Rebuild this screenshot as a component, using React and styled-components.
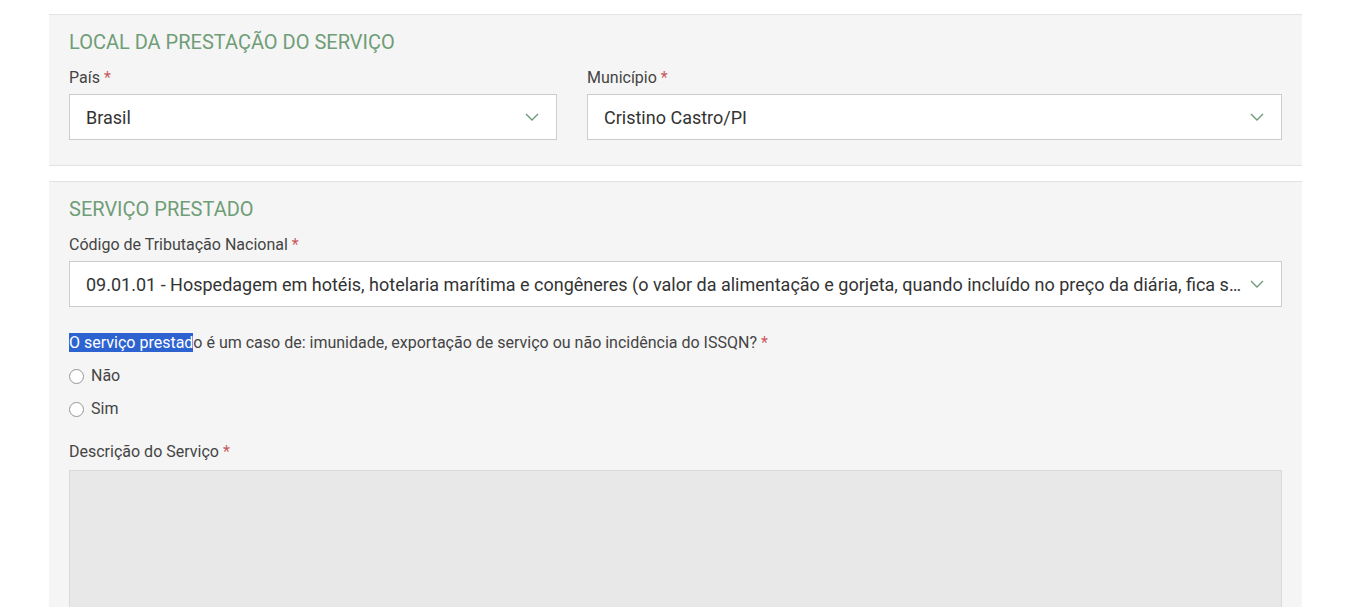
import React from "react";
import styled, { createGlobalStyle } from "styled-components";

const GlobalStyle = createGlobalStyle`
  html, body {
    margin: 0;
    padding: 0;
    background: #ffffff;
  }
  body {
    font-family: Roboto, "Liberation Sans", sans-serif;
    color: #444444;
  }
  * {
    box-sizing: border-box;
  }
`;

const Page = styled.div`
  width: 1253px;
  margin: 0 0 0 49px;
  padding: 14px 0 300px;
  display: flex;
  flex-direction: column;
  gap: 15px;
`;

const Section = styled.section`
  background: #f5f5f5;
  border-top: 1px solid #e3e3e3;
  border-bottom: 1px solid #e3e3e3;
  padding: 16px 20px 25px;
`;

const SectionTitle = styled.h2`
  margin: 0 0 3px;
  font-size: 20px;
  font-weight: 400;
  line-height: 22px;
  color: #6f9d77;
  text-transform: uppercase;
`;

const Row = styled.div`
  display: grid;
  grid-template-columns: ${(p) => p.$cols || "1fr"};
  column-gap: 30px;
`;

const Field = styled.div`
  display: flex;
  flex-direction: column;
  min-width: 0;
  margin-top: ${(p) => p.$top || 0}px;
`;

const Label = styled.label`
  font-size: 16px;
  line-height: 22px;
  color: #444444;
  margin-top: 11px;
  margin-bottom: 5px;
`;

const Required = styled.span`
  color: #c9595c;
  margin-left: 4px;
`;

const SelectBox = styled.div`
  height: 46px;
  background: #ffffff;
  border: 1px solid #cccccc;
  display: flex;
  align-items: center;
  padding: 0 17px 0 16px;
  gap: 2px;
`;

const SelectValue = styled.span`
  flex: 1;
  min-width: 0;
  font-size: 18px;
  color: #333333;
  white-space: nowrap;
  overflow: hidden;
  text-overflow: ellipsis;
`;

const Question = styled.div`
  margin-top: 25px;
  font-size: 16px;
  line-height: 22px;
  color: #444444;
`;

const Selected = styled.span`
  background: #2d63d0;
  color: #ffffff;
`;

const RadioList = styled.div`
  display: flex;
  flex-direction: column;
  gap: 11px;
  margin-top: 11px;
`;

const RadioRow = styled.label`
  display: flex;
  align-items: center;
  gap: 7px;
  font-size: 16px;
  line-height: 22px;
  color: #444444;
`;

const RadioCircle = styled.span`
  width: 15px;
  height: 15px;
  border-radius: 50%;
  border: 1px solid #959595;
  background: #ffffff;
`;

const TextArea = styled.div`
  margin-top: 2px;
  height: 260px;
  background: #e8e8e8;
  border: 1px solid #dadada;
`;

const Chevron = () => (
  <svg width="14" height="8" viewBox="0 0 14 8" fill="none">
    <path d="M1 1 L7 7 L13 1" stroke="#6f9a7b" strokeWidth="1.4" />
  </svg>
);

const Select = ({ value }) => (
  <SelectBox>
    <SelectValue>{value}</SelectValue>
    <Chevron />
  </SelectBox>
);

const Radio = ({ label }) => (
  <RadioRow>
    <RadioCircle />
    {label}
  </RadioRow>
);

export default function App() {
  return (
    <>
      <GlobalStyle />
      <Page>
        <Section>
          <SectionTitle>Local da Prestação do Serviço</SectionTitle>
          <Row $cols="minmax(0, 488fr) minmax(0, 695fr)">
            <Field>
              <Label>
                País<Required>*</Required>
              </Label>
              <Select value="Brasil" />
            </Field>
            <Field>
              <Label>
                Município<Required>*</Required>
              </Label>
              <Select value="Cristino Castro/PI" />
            </Field>
          </Row>
        </Section>
        <Section>
          <SectionTitle>Serviço Prestado</SectionTitle>
          <Field>
            <Label>
              Código de Tributação Nacional<Required>*</Required>
            </Label>
            <Select value="09.01.01 - Hospedagem em hotéis, hotelaria marítima e congêneres (o valor da alimentação e gorjeta, quando incluído no preço da diária, fica sujeito ao Imposto Sobre Serviços)" />
          </Field>
          <Question>
            <Selected>O serviço prestad</Selected>o é um caso de: imunidade,
            exportação de serviço ou não incidência do ISSQN?
            <Required>*</Required>
          </Question>
          <RadioList>
            <Radio label="Não" />
            <Radio label="Sim" />
          </RadioList>
          <Field $top={10}>
            <Label>
              Descrição do Serviço<Required>*</Required>
            </Label>
            <TextArea />
          </Field>
        </Section>
      </Page>
    </>
  );
}
